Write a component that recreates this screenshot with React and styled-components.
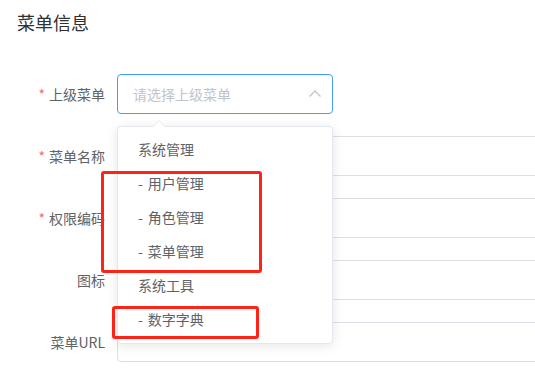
import styled, { createGlobalStyle } from "styled-components";

const GlobalStyle = createGlobalStyle`
  body {
    margin: 0;
    background: #fff;
    font-family: "Noto Sans CJK SC", "Noto Sans", sans-serif;
    overflow: hidden;
  }
`;

const Page = styled.div`
  width: 535px;
  height: 374px;
  padding: 10px 0 0 17px;
  box-sizing: border-box;
  overflow: hidden;
`;

const Title = styled.h2`
  margin: 0 0 40px;
  font-size: 18px;
  line-height: 24px;
  font-weight: 400;
  color: #303133;
`;

const FormItem = styled.div`
  display: flex;
  align-items: center;
  height: 40px;
  margin-bottom: 22px;
`;

const Label = styled.label`
  width: 100px;
  flex-shrink: 0;
  box-sizing: border-box;
  padding-right: 12px;
  text-align: right;
  font-size: 14px;
  line-height: 40px;
  color: #606266;

  &::before {
    content: ${(p) => (p.$required ? '"*"' : '""')};
    color: #f56c6c;
    margin-right: 4px;
  }
`;

const SelectWrap = styled.div`
  position: relative;
  width: 216px;
`;

const SelectBox = styled.div`
  display: flex;
  align-items: center;
  justify-content: space-between;
  height: 40px;
  box-sizing: border-box;
  padding: 0 10px 0 15px;
  border: 1px solid #409eff;
  border-radius: 4px;
  font-size: 14px;
  color: #c0c4cc;
`;

const Input = styled.div`
  width: 450px;
  height: 40px;
  flex-shrink: 0;
  box-sizing: border-box;
  border: 1px solid #dcdfe6;
  border-radius: 4px;
`;

const Dropdown = styled.ul`
  position: absolute;
  left: 0;
  top: calc(100% + 12px);
  width: 216px;
  box-sizing: border-box;
  margin: 0;
  padding: 5px 0 7px;
  list-style: none;
  background: #fff;
  border: 1px solid #e4e7ed;
  border-radius: 4px;
  box-shadow: 0 2px 12px 0 rgba(0, 0, 0, 0.1);
  z-index: 10;

  &::before,
  &::after {
    content: "";
    position: absolute;
    left: 35px;
    border: 6px solid transparent;
    border-top-width: 0;
  }
  &::before {
    top: -7px;
    border-bottom-color: #e4e7ed;
  }
  &::after {
    top: -6px;
    border-bottom-color: #fff;
  }
`;

const Option = styled.li`
  height: 34px;
  line-height: 34px;
  padding: 0 20px;
  font-size: 14px;
  color: #606266;
  white-space: nowrap;
`;

const Dash = styled.span`
  margin-right: 5px;
`;

const Mark = styled.div`
  position: absolute;
  border: 3px solid #ff2317;
  border-radius: 3px;
  box-sizing: border-box;
  pointer-events: none;
`;

const options = [
  { name: "系统管理" },
  { name: "用户管理", child: true },
  { name: "角色管理", child: true },
  { name: "菜单管理", child: true },
  { name: "系统工具" },
  { name: "数字字典", child: true },
];

function ChevronUp() {
  return (
    <svg width="14" height="14" viewBox="0 0 14 14">
      <polyline
        points="1.5,9.5 7,4 12.5,9.5"
        fill="none"
        stroke="#c0c4cc"
        strokeWidth="1.3"
      />
    </svg>
  );
}

export default function App() {
  return (
    <Page>
      <GlobalStyle />
      <Title>菜单信息</Title>
      <FormItem>
        <Label $required>上级菜单</Label>
        <SelectWrap>
          <SelectBox>
            <span>请选择上级菜单</span>
            <ChevronUp />
          </SelectBox>
          <Dropdown>
            {options.map((o) => (
              <Option key={o.name}>
                {o.child && <Dash>-</Dash>}
                {o.name}
              </Option>
            ))}
            <Mark style={{ left: -17, top: 44, width: 161, height: 102 }} />
            <Mark style={{ left: -6, top: 179, width: 147, height: 33 }} />
          </Dropdown>
        </SelectWrap>
      </FormItem>
      <FormItem>
        <Label $required>菜单名称</Label>
        <Input />
      </FormItem>
      <FormItem>
        <Label $required>权限编码</Label>
        <Input />
      </FormItem>
      <FormItem>
        <Label>图标</Label>
        <Input />
      </FormItem>
      <FormItem>
        <Label>菜单URL</Label>
        <Input />
      </FormItem>
    </Page>
  );
}
